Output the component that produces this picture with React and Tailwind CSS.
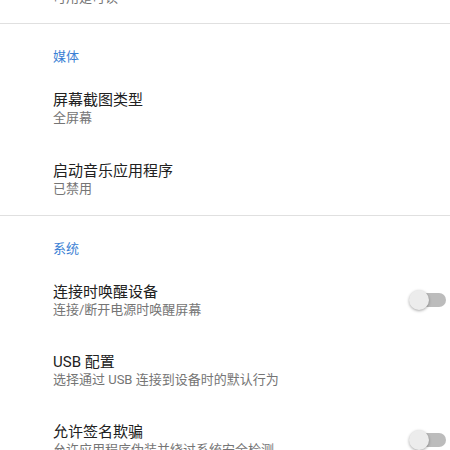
import React from "react";

const font = { fontFamily: 'Roboto, "Noto Sans CJK SC", "Noto Sans", sans-serif' };

function Toggle() {
  return (
    <div className="relative w-[37px] h-[20px] shrink-0">
      <div className="absolute left-[3px] top-[3px] w-[34px] h-[14px] rounded-full bg-[#bcbcbc]" />
      <div className="absolute left-0 top-0 w-[20px] h-[20px] rounded-full bg-[#ececec] shadow-[0_1px_3px_rgba(0,0,0,0.35)]" />
    </div>
  );
}

function Item({ title, sub, toggle, className = "pb-[17px]" }) {
  return (
    <div className={"flex items-center pl-[53px] pr-[4px] pt-[17px] " + className}>
      <div className="flex-1 min-w-0">
        <div className="text-[15px] leading-[20px] text-[#212121] whitespace-nowrap">{title}</div>
        <div className="text-[13px] leading-[16px] text-[#757575] whitespace-nowrap">{sub}</div>
      </div>
      {toggle && <Toggle />}
    </div>
  );
}

function Header({ children }) {
  return (
    <div className="pl-[53px] pt-[23px] pb-[6px] text-[13px] leading-[20px] text-[#3b7fd4]">
      {children}
    </div>
  );
}

export default function App() {
  return (
    <div className="w-[450px] h-[450px] overflow-hidden bg-white" style={font}>
      <Item className="mt-[-47px] pb-[17px]" title="屏幕唤醒" sub="可用是可读" />
      <div className="h-px bg-[#e0e0e0]" />
      <Header>媒体</Header>
      <Item className="pb-[18px]" title="屏幕截图类型" sub="全屏幕" />
      <Item className="pb-[18px]" title="启动音乐应用程序" sub="已禁用" />
      <div className="h-px bg-[#e0e0e0]" />
      <Header>系统</Header>
      <Item title="连接时唤醒设备" sub="连接/断开电源时唤醒屏幕" toggle />
      <Item title="USB 配置" sub="选择通过 USB 连接到设备时的默认行为" />
      <Item title="允许签名欺骗" sub="允许应用程序伪装并绕过系统安全检测" toggle />
    </div>
  );
}
